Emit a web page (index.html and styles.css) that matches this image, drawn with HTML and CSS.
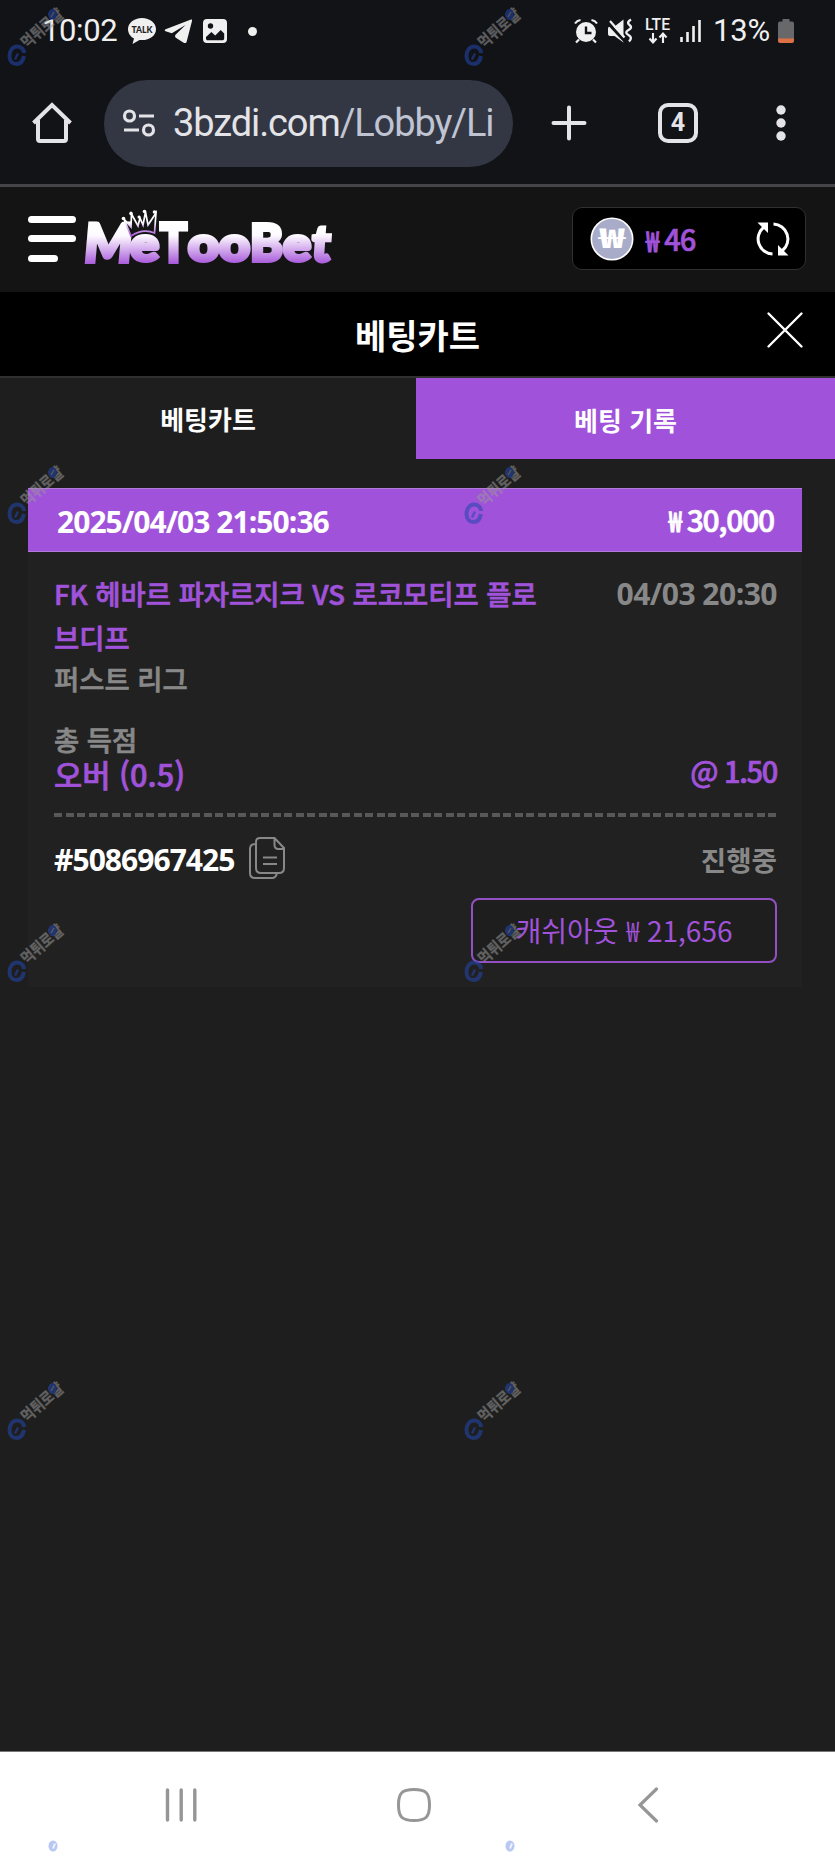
FILE: index.html
```html
<!DOCTYPE html>
<html lang="ko">
<head>
<meta charset="utf-8">
<title>베팅카트</title>
<link rel="stylesheet" href="styles.css">
</head>
<body>
<svg class="defs" width="0" height="0" aria-hidden="true">
  <defs>
    <linearGradient id="logo-fill" gradientUnits="userSpaceOnUse" x1="0" y1="16" x2="0" y2="57">
      <stop offset="0" stop-color="#fff"/>
      <stop offset=".28" stop-color="#fdfaff"/>
      <stop offset="1" stop-color="#a351d8"/>
    </linearGradient>
    <linearGradient id="logo-fill-slant" gradientUnits="userSpaceOnUse" x1="0" y1="-38" x2="0" y2="4">
      <stop offset="0" stop-color="#fff"/>
      <stop offset=".28" stop-color="#fdfaff"/>
      <stop offset="1" stop-color="#a351d8"/>
    </linearGradient>
    <linearGradient id="crown-fill" gradientUnits="userSpaceOnUse" x1="0" y1="2" x2="0" y2="28">
      <stop offset=".45" stop-color="#fff"/>
      <stop offset="1" stop-color="#a351d8"/>
    </linearGradient>
    <symbol id="mark" viewBox="0 0 70 70">
      <path d="M24 53C24 49 20.500 46.500 17 46.500C12.500 46.500 9.500 51 9.500 56C9.500 61 12.500 64 16.500 64C20.500 64 23 61 24 56" fill="none" stroke="#2346b0" stroke-width="4"/>
      <path d="M15 59.500l3-6" stroke="#2346b0" stroke-width="2.400"/>
      <text class="mark-text" transform="translate(27 49) rotate(-41)" textLength="50" lengthAdjust="spacingAndGlyphs">먹튀로얄</text>
      <ellipse cx="52.500" cy="14.500" rx="4.200" ry="5.500" fill="#2346b0"/>
      <path d="M51 17l3-5" stroke="#889" stroke-width="1.400"/>
    </symbol>
    <symbol id="mark-dot" viewBox="0 0 12 14">
      <ellipse cx="6" cy="7" rx="4.500" ry="5.500" fill="#b9c8f3"/>
      <path d="M6 9.500l2-5" stroke="#f1f4ff" stroke-width="2"/>
    </symbol>
  </defs>
</svg>
<div class="screen">
  <header class="status">
    <span class="clock">10:02</span>
    <svg class="st-talk" width="30" height="28" viewBox="0 0 30 28"><path d="M15 1C7 1 1 6 1 12.200c0 4 2.500 7.400 6 9.400L5.500 27l7-4.100C21.500 24 29 19 29 12.200 29 6 23 1 15 1z" fill="#f0f0f0"/><text class="talk-text" x="15" y="16" text-anchor="middle" textLength="21" lengthAdjust="spacingAndGlyphs">TALK</text></svg>
    <svg class="st-plane" width="30" height="28" viewBox="0 0 30 28"><path d="M27 2.500L1.600 12.300c-1.300.6-1.200 1.600 0 2l6.200 2L21.500 8 11.300 18c-.4 1-.3 2 .5 2.700l7.900 5c1.500.8 2.600.3 3-1.200L28 4c.2-1.400-.2-1.800-1-1.500z" fill="#f0f0f0"/></svg>
    <svg class="st-photo" width="26" height="26" viewBox="0 0 26 26"><path fill-rule="evenodd" d="M5 1h16a4 4 0 0 1 4 4v16a4 4 0 0 1-4 4H5a4 4 0 0 1-4-4V5a4 4 0 0 1 4-4zM4 20.500c0 1.200.7 1.800 1.800 1.800h14.400c1.200 0 2-.7 2-1.800v-5l-3.500-3.400-5.500 5.400-3.800-3.400L4 19z" fill="#f0f0f0"/><circle cx="8.500" cy="8" r="2.700" fill="#121317"/></svg>
    <i class="st-dot"></i>
    <svg class="st-alarm" width="26" height="26" viewBox="0 0 26 26"><circle cx="13" cy="14" r="10" fill="#f0f0f0"/><path d="M2 5.500Q4 2.500 7.500 2M24 5.500Q22 2.500 18.500 2M6 21.500l-3 3M20 21.500l3 3" fill="none" stroke="#f0f0f0" stroke-width="2.200"/><path d="M13 8.500V15h5.500" fill="none" stroke="#121317" stroke-width="2.400"/></svg>
    <svg class="st-mute" width="26" height="26" viewBox="0 0 26 26"><path d="M3 8.500h4.500L16.500 1.500v23L7.500 18H3q-2 0-2-2v-5.500q0-2 2-2z" fill="#f0f0f0"/><path d="M1 5L20 25.500" stroke="#121317" stroke-width="3"/><path d="M3 3L17.500 19.500" stroke="#f0f0f0" stroke-width="2.200"/><path d="M24 1.500q-5 3-1.500 5.500t-1 5 0 5 .5 6.500" fill="none" stroke="#f0f0f0" stroke-width="2.400"/></svg>
    <svg class="st-lte" width="28" height="28" viewBox="0 0 28 28"><text class="lte-text" x="1" y="13" textLength="25" lengthAdjust="spacingAndGlyphs">LTE</text><path d="M9 16v9M5.500 21.500L9 25.500l3.500-4M19 26v-9M15.500 20.500L19 16.500l3.500 4" fill="none" stroke="#f0f0f0" stroke-width="2.100"/></svg>
    <svg class="st-signal" width="22" height="24" viewBox="0 0 22 24"><path d="M1.500 18v5M7.500 13v10M13.500 7v16M19.500 1v22" stroke="#f0f0f0" stroke-width="2.600"/></svg>
    <span class="percent">13%</span>
    <svg class="st-battery" width="18" height="26" viewBox="0 0 18 26"><path d="M5.500 1h7v2.500H15a2 2 0 0 1 2 2V21H1V5.500a2 2 0 0 1 2-2h2.500z" fill="#68686a"/><path d="M1 20.500h16V23a2 2 0 0 1-2 2H3a2 2 0 0 1-2-2z" fill="#dc7145"/></svg>
  </header>
  <nav class="browser">
    <svg class="home" width="42" height="44" viewBox="0 0 42 44"><path d="M2.500 22L21 4l18.500 18M7 19v19q0 2 2 2h24q2 0 2-2V19" fill="none" stroke="#e3e3e8" stroke-width="4"/></svg>
    <div class="address">
      <svg width="34" height="30" viewBox="0 0 34 30"><g fill="none" stroke="#e3e3e8"><circle cx="7.500" cy="8" r="5" stroke-width="3.200"/><circle cx="26.500" cy="22" r="5" stroke-width="3.200"/><path d="M17 8h15M2 22h15" stroke-width="3"/></g></svg>
      <div class="url"><span>3bzdi.com</span><em>/Lobby/Liv</em></div>
    </div>
    <svg class="plus" width="36" height="36" viewBox="0 0 36 36"><path d="M18 2.500v31M2.500 18h31" stroke="#e3e3e8" stroke-width="4" stroke-linecap="round"/></svg>
    <div class="tab-count">4</div>
    <svg class="kebab" width="10" height="38" viewBox="0 0 10 38"><g fill="#e3e3e8"><circle cx="5" cy="6" r="4.700"/><circle cx="5" cy="19" r="4.700"/><circle cx="5" cy="32" r="4.700"/></g></svg>
  </nav>
  <div class="brand-bar">
    <div class="burger"><i></i><i></i><i></i></div>
    <svg class="logo" width="252" height="62" viewBox="0 0 252 62" role="img" aria-label="MeTooBet">
      <g class="logo-text" fill="url(#logo-fill)" stroke="url(#logo-fill)">
        <text transform="translate(1 54) skewX(-5)" fill="url(#logo-fill-slant)" stroke="url(#logo-fill-slant)" font-size="53" textLength="48" lengthAdjust="spacingAndGlyphs">M</text>
        <text x="48" y="53" font-size="48" textLength="29" lengthAdjust="spacingAndGlyphs">e</text>
        <text x="78" y="54" font-size="53" textLength="27" lengthAdjust="spacingAndGlyphs">T</text>
        <text x="106" y="53" font-size="48" textLength="31" lengthAdjust="spacingAndGlyphs">o</text>
        <text x="137" y="53" font-size="48" textLength="31" lengthAdjust="spacingAndGlyphs">o</text>
        <text x="168" y="53" font-size="52" textLength="33" lengthAdjust="spacingAndGlyphs">B</text>
        <text x="201" y="53" font-size="48" textLength="28" lengthAdjust="spacingAndGlyphs">e</text>
        <text transform="translate(229 53) skewX(-4)" fill="url(#logo-fill-slant)" stroke="url(#logo-fill-slant)" font-size="50" textLength="18" lengthAdjust="spacingAndGlyphs">t</text>
      </g>
      <path d="M42 11l7 8 .5-13 6.500 12 2-8 3 7 2.500-13L66 17l8-12-1.500 20Q61 20 49 28z" fill="#141414" stroke="url(#crown-fill)" stroke-width="1.700"/>
      <g fill="#fff"><circle cx="41.500" cy="10.500" r="1.800"/><circle cx="49" cy="5.500" r="1.800"/><circle cx="57" cy="9" r="1.500"/><circle cx="62.500" cy="3.500" r="1.800"/><circle cx="72.500" cy="4" r="1.800"/></g>
    </svg>
    <div class="wallet">
      <svg width="44" height="44" viewBox="0 0 44 44"><circle cx="22" cy="22" r="20.700" fill="#a9acc9" stroke="#fff" stroke-width="1.600"/><text class="coin-text" x="22" y="31" text-anchor="middle" textLength="26" lengthAdjust="spacingAndGlyphs">₩</text></svg>
      <span class="balance"><b>₩</b>46</span>
      <svg class="refresh" width="36" height="36" viewBox="0 0 36 36"><g fill="none" stroke="#fff" stroke-width="3"><path d="M17.500 33A15 15 0 0 1 8.500 6.500"/><path d="M18.500 3A15 15 0 0 1 27.500 29.500"/></g><path d="M2.500 1.500H13V12zM33.500 34.500H23V24z" fill="#fff"/></svg>
    </div>
  </div>
  <div class="title-bar">
    <h1>베팅카트</h1>
    <svg class="close" width="38" height="38" viewBox="0 0 38 38"><path d="M2.500 2.500l33 33M35.500 2.500l-33 33" stroke="#fff" stroke-width="2.400" stroke-linecap="round"/></svg>
  </div>
  <div class="tabs"><div class="tab">베팅카트</div><div class="tab active">베팅 기록</div></div>
  <main>
    <section class="ticket">
      <div class="ticket-head"><span class="stamp">2025/04/03 21:50:36</span><span class="stake"><b>₩</b>30,000</span></div>
      <div class="ticket-body">
        <div class="match">
          <div><div class="teams">FK 헤바르 파자르지크 VS 로코모티프 플로<br>브디프</div><div class="league">퍼스트 리그</div></div>
          <span class="kickoff">04/03 20:30</span>
        </div>
        <div class="market">총 득점</div>
        <div class="pick"><span>오버 (0.5)</span><span class="odds">@ 1.50</span></div>
        <div class="divider"></div>
        <div class="ref">
          <span class="ref-no">#5086967425</span>
          <svg width="38" height="44" viewBox="0 0 38 44"><path d="M12 2h14.500L36 12v20q0 5-5 5H13q-5 0-5-5V6q0-4 4-4zM26.500 2v7q0 4 4 4H36M8 8H7q-5 0-5 5v24q0 5 5 5h17q4 0 5-5M15 21.500h14M15 28h14" fill="none" stroke="#888" stroke-width="2"/></svg>
          <span class="state">진행중</span>
        </div>
        <div class="cashout">캐쉬아웃 <b>₩</b> 21,656</div>
      </div>
    </section>
  </main>
  <footer class="nav">
    <svg width="32" height="34" viewBox="0 0 32 34"><path d="M2.500 2v30M16.200 2v30M29.800 2v30" stroke="#969696" stroke-width="3.400" stroke-linecap="round"/></svg>
    <svg width="36" height="36" viewBox="0 0 36 36"><path d="M18 2.500c12 0 15.500 3.500 15.500 15.500S30 33.500 18 33.500 2.500 30 2.500 18 6 2.500 18 2.500z" fill="none" stroke="#969696" stroke-width="3"/></svg>
    <svg width="22" height="36" viewBox="0 0 22 36"><path d="M19.500 2L3 18l16.500 16" fill="none" stroke="#969696" stroke-width="3.200" stroke-linecap="round"/></svg>
  </footer>
  <div class="marks" aria-hidden="true">
    <svg class="mark r0 c0"><use href="#mark"/></svg><svg class="mark r0 c1"><use href="#mark"/></svg>
    <svg class="mark r1 c0"><use href="#mark"/></svg><svg class="mark r1 c1"><use href="#mark"/></svg>
    <svg class="mark r2 c0"><use href="#mark"/></svg><svg class="mark r2 c1"><use href="#mark"/></svg>
    <svg class="mark r3 c0"><use href="#mark"/></svg><svg class="mark r3 c1"><use href="#mark"/></svg>
    <svg class="dot d0"><use href="#mark-dot"/></svg><svg class="dot d1"><use href="#mark-dot"/></svg>
  </div>
</div>
</body>
</html>
```
FILE: styles.css
```css
* { box-sizing: border-box; }
body { margin: 0; background: #1e1e1e; color: #fff; font-family: "Noto Sans CJK KR", sans-serif; }
svg { display: block; flex: none; }
.defs { position: absolute; }
.screen { position: relative; width: 835px; height: 1856px; display: flex; flex-direction: column; overflow: hidden; }
.screen > * { flex: none; }

.status { height: 62px; background: #121317; display: flex; align-items: center; padding-left: 42px; color: #f0f0f0; font: 31px/62px Roboto, sans-serif; }
.clock { width: 85px; letter-spacing: -0.4px; }
.st-plane { margin-left: 7px; }
.st-photo { margin-left: 8px; }
.st-dot { width: 9px; height: 9px; border-radius: 50%; background: #f0f0f0; margin-left: 20px; }
.st-alarm { margin-left: 316px; }
.st-mute { margin-left: 8px; }
.st-lte { margin-left: 11px; }
.st-signal { margin-left: 8px; }
.percent { width: 61px; margin-left: 11px; letter-spacing: -0.2px; white-space: nowrap; }
.st-battery { margin-left: 3px; }
.talk-text { font: 900 9px Lato, sans-serif; fill: #222; }
.lte-text { font: 500 16px Roboto, sans-serif; fill: #f0f0f0; }

.browser { height: 125px; background: #121317; border-bottom: 3px solid #454548; display: flex; align-items: center; padding: 0 0 0 31px; }
.address { width: 409px; height: 87px; border-radius: 44px; background: #323743; margin-left: 31px; padding-left: 18px; display: flex; align-items: center; }
.url { width: 320px; margin-left: 17px; overflow: hidden; white-space: nowrap; font: 38px/60px Roboto, sans-serif; color: #e3e3e8; letter-spacing: -1.1px; }
.url em { font-style: normal; color: #bfc3d2; }
.plus { margin-left: 38px; }
.tab-count { width: 40px; height: 40px; margin-left: 71px; border: 4px solid #e3e3e8; border-radius: 10px; color: #e3e3e8; text-align: center; font: 700 25px/32px Roboto, sans-serif; }
.kebab { margin-left: 78px; }

.brand-bar { height: 105px; background: #141414; display: flex; align-items: center; padding: 0 29px 2px 28px; }
.burger { width: 48px; height: 46px; display: flex; flex-direction: column; justify-content: space-between; }
.burger i { height: 7px; border-radius: 4px; background: #fff; }
.burger i:last-child { width: 30px; }
.logo { margin-left: 6px; }
.logo-text { font-family: Lato, sans-serif; font-weight: 900; stroke-width: 4px; }
.wallet { width: 234px; height: 63px; margin-left: auto; border: 1px solid #303030; border-radius: 10px; background: #000; display: flex; align-items: center; padding: 0 14px 0 17px; }
.coin-text { font: 900 27px "Noto Sans CJK KR", sans-serif; fill: #fff; }
.balance { margin-left: 12px; margin-top: -1px; color: #a053da; font-size: 29px; font-weight: 500; letter-spacing: -1px; -webkit-text-stroke: .7px; }
.balance b, .stake b { display: inline-block; transform: scaleY(1.22); transform-origin: 50% 68%; font-size: 23px; font-weight: 500; margin-right: 6px; }
.refresh { margin-left: auto; }

.title-bar { height: 84px; background: #000; display: grid; grid-template-columns: 1fr auto 1fr; align-items: center; padding-right: 31px; padding-left: 31px; }
.title-bar h1 { grid-column: 2; margin: 2px 0 0; font-size: 34px; line-height: 50px; font-weight: 700; }
.close { justify-self: end; margin-bottom: 8px; }
.tabs { height: 83px; border-top: 2px solid #303030; display: grid; grid-template-columns: 416px 1fr; font-size: 26px; font-weight: 700; line-height: 81px; text-align: center; }
.active { background: #a053da; line-height: 83px; height: 81px; }

main { padding: 29px 33px 0 28px; height: 1292px; }
.ticket { height: 499px; background: #212121; }
.ticket-head { height: 64px; background: #a053da; border-top: 1px solid #b17ada; border-bottom: 1px solid #b17ada; display: flex; align-items: center; justify-content: space-between; padding: 0 28px 0 29px; }
.stamp, .kickoff, .ref-no { font-family: "Open Sans", sans-serif; font-weight: 700; font-size: 30px; letter-spacing: -.95px; }
.stamp { padding-top: 2px; }
.stake { font-size: 30px; font-weight: 500; letter-spacing: -1.2px; -webkit-text-stroke: .7px; line-height: 60px; }
.ticket-body { padding: 21px 25px 0 26px; }
.match { display: flex; justify-content: space-between; margin-top: -2px; }
.teams { font-size: 27.400px; line-height: 44px; font-weight: 500; color: #a053da; white-space: nowrap; -webkit-text-stroke: .7px; }
.league, .market { font-size: 27.400px; font-weight: 500; color: #888; line-height: 38px; -webkit-text-stroke: .7px; }
.kickoff { color: #888; line-height: 44px; white-space: nowrap; letter-spacing: -.5px; padding-top: 1px; }
.market { line-height: 34px; margin-top: 25px; }
.pick { display: flex; justify-content: space-between; height: 39px; line-height: 36px; font-size: 30.700px; font-weight: 500; color: #a053da; -webkit-text-stroke: .7px; }
.odds { font-size: 29px; letter-spacing: -1.3px; line-height: 29px; }
.divider { height: 4px; margin-top: 18px; background: repeating-linear-gradient(90deg, #585858 0 8px, transparent 8px 11.520px); }
.ref { height: 44px; margin-top: 19px; display: flex; align-items: center; }
.ref-no { width: 194px; padding-top: 3px; }
.state { margin-left: auto; font-size: 27.600px; font-weight: 700; color: #888; line-height: 44px; padding-top: 2px; }
.cashout { width: 306px; height: 65px; margin: 18px 0 0 auto; border: 2px solid #9250c4; border-radius: 8px; color: #a053da; font-size: 28px; line-height: 61px; text-align: center; background: #1e1e1e; white-space: nowrap; }
.cashout b { display: inline-block; transform: scaleY(1.25); transform-origin: 50% 65%; font-size: 23px; font-weight: 400; }

.nav { height: 105px; background: #fff; border-top: 1px solid #777; display: flex; align-items: flex-start; padding: 36px 0 0 165px; }
.nav svg:nth-child(2) { margin-left: 199px; margin-top: -1px; }
.nav svg:nth-child(3) { margin-left: 205px; margin-top: -1px; }

.marks { position: absolute; inset: 0; pointer-events: none; }
.mark { position: absolute; width: 70px; height: 70px; opacity: .55; overflow: visible; }
.mark-text { font: 700 16px "Noto Sans CJK KR", sans-serif; fill: #999; stroke: #999; stroke-width: .3px; }
.c0 { left: 0; }
.c1 { left: 457px; }
.r0 { top: 0; }
.r1 { top: 458px; }
.r2 { top: 916px; }
.r3 { top: 1374px; }
.dot { position: absolute; top: 1839px; width: 12px; height: 14px; }
.d0 { left: 47px; }
.d1 { left: 504px; }
```
